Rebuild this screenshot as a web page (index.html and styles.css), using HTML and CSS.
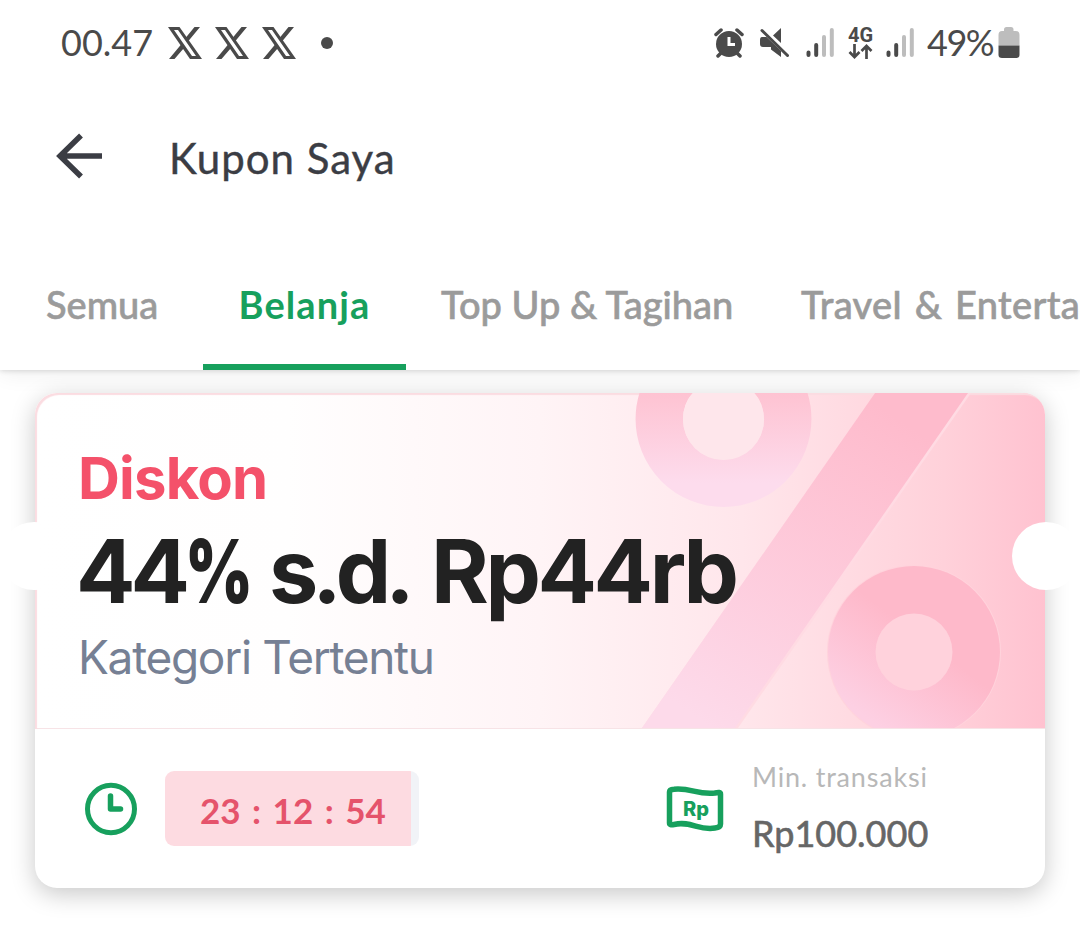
FILE: index.html
```html
<!DOCTYPE html>
<html lang="id">
<head>
<meta charset="utf-8">
<title>Kupon Saya</title>
<link rel="stylesheet" href="styles.css">
</head>
<body>
<svg width="0" height="0" class="defs">
  <defs>
    <symbol id="x-logo" viewBox="0 0 34 32">
      <path d="M0 0H11.500L34 32H22ZM6 3L24 29H28L10 3Z" fill-rule="evenodd"/>
      <path d="M26.500 0H32L20 14.500L17.300 11.200ZM13.500 17L16.200 20.800L6.500 32H1Z"/>
    </symbol>
    <symbol id="signal" viewBox="0 0 28 30">
      <g stroke-width="4" stroke-linecap="round"><path d="M2.500 24.500V27M10.200 17V27" stroke="#4a4a4a"/><path d="M18 9V27M25.800 2V27" stroke="#bdbdbd"/></g>
    </symbol>
  </defs>
</svg>
<div class="status">
  <span class="time">00.47</span>
  <div class="notifs">
    <svg class="x"><use href="#x-logo"/></svg>
    <svg class="x"><use href="#x-logo"/></svg>
    <svg class="x"><use href="#x-logo"/></svg>
  </div>
  <span class="dot"></span>
  <div class="system">
    <svg class="alarm" width="30" height="30" viewBox="0 0 30 30">
      <circle cx="15" cy="16" r="13" fill="#4a4a4a"/>
      <path d="M2 6.500L7 2M28 6.500L23 2M7 25L4 28M23 25L26 28" stroke="#4a4a4a" stroke-width="3.500" stroke-linecap="round"/>
      <path d="M15 9V16.500H21" fill="none" stroke="#fff" stroke-width="3"/>
    </svg>
    <svg class="mute" width="30" height="30" viewBox="0 0 30 30">
      <path d="M22 0V15L14 7.500ZM3 9H7.500L22 23V29L12 21.500V19H4Q1 19 1 16V12Q1 9 3 9Z" fill="#4a4a4a"/>
      <path d="M3 2.500L28.500 27.500" stroke="#4a4a4a" stroke-width="3" stroke-linecap="round"/>
    </svg>
    <svg class="signal"><use href="#signal"/></svg>
    <div class="net"><span>4G</span>
      <svg width="25" height="15" viewBox="0 0 25 15" fill="none" stroke="#4a4a4a" stroke-width="2.700"><path d="M6.500 0V12.500M1.500 8L6.500 13L11.500 8M18.500 15V2.500M13.500 7L18.500 2L23.500 7"/></svg>
    </div>
    <svg class="signal"><use href="#signal"/></svg>
    <span class="percent">49%</span>
    <svg class="battery" width="22" height="32" viewBox="0 0 22 32"><path d="M6 4V2.500Q6 0 8.500 0H13Q15.500 0 15.500 2.500V4H18Q21.500 4 21.500 8V18.500H.5V8Q.5 4 4 4Z" fill="#bdbdbd"/><path d="M.5 18.500H21.500V28Q21.500 31 18 31H4Q.5 31 .5 28Z" fill="#4a4a4a"/></svg>
  </div>
</div>
<header class="header">
  <svg width="46" height="46" viewBox="0 0 46 46" fill="none" stroke="#3b3d44" stroke-width="5.500"><path d="M25 2.500L4 23L25 43.500M3 23H46"/></svg>
  <h1>Kupon Saya</h1>
</header>
<nav class="tabs">
  <a class="tab semua">Semua</a>
  <a class="tab active">Belanja</a>
  <a class="tab topup">Top Up &amp; Tagihan</a>
  <a class="tab travel">Travel &amp; Enterta</a>
</nav>
<main>
  <article class="coupon">
    <section class="banner">
      <svg class="art" width="1010" height="335" viewBox="35 393 1010 335">
        <defs>
          <linearGradient id="ring1" x1="0" y1="0" x2="0" y2="1"><stop offset=".3" stop-color="#fec3d2"/><stop offset="1" stop-color="#fddced"/></linearGradient>
          <linearGradient id="ring2" x1=".7" y1=".3" x2=".25" y2=".9"><stop offset=".25" stop-color="#feb9ca"/><stop offset="1" stop-color="#fdd0e3"/></linearGradient>
          <linearGradient id="bar" gradientUnits="userSpaceOnUse" x1="900" y1="420" x2="700" y2="720"><stop stop-color="#febbcc"/><stop offset="1" stop-color="#fddaea"/></linearGradient>
        </defs>
        <path d="M875 393H971L738 728H642Z" fill="#ffdbe3"/>
        <path d="M875 393H968L735 728H642Z" fill="url(#bar)"/>
        <circle cx="723.500" cy="419" r="64.200" fill="none" stroke="url(#ring1)" stroke-width="47.500"/>
        <circle cx="723.500" cy="419.500" r="40.500" fill="#fee6eb"/>
        <circle cx="914" cy="652" r="87" fill="#ffd3dc"/>
        <circle cx="914" cy="652" r="86" fill="url(#ring2)"/>
        <circle cx="914" cy="652" r="38.500" fill="#ffd2dc"/>
      </svg>
      <div class="copy">
        <div class="kind">Diskon</div>
        <div class="value"><span class="rate">44<b>%</b></span> <span class="until">s.d.</span> <span class="cap">Rp44rb</span></div>
        <div class="scope">Kategori Tertentu</div>
      </div>
    </section>
    <section class="details">
      <svg class="clock" width="52" height="54" viewBox="0 0 52 54" fill="none" stroke="#17a05d" stroke-width="5"><ellipse cx="26" cy="27" rx="23.500" ry="23.700"/><path d="M25.500 14V27H35.500" stroke-width="5.500" stroke-linecap="round" stroke-linejoin="round"/></svg>
      <div class="timer"><span>23</span><span class="colon">:</span><span>12</span><span class="colon">:</span><span>54</span></div>
      <div class="money">
        <svg width="58" height="46" viewBox="0 0 58 46" fill="none" stroke="#17a05d" stroke-width="5.500" stroke-linejoin="round"><path d="M3.500 6Q3.500 3.500 8 3.200C25 1.500 31 9 49 7Q54.500 5.500 54.500 8V38Q54.500 41.500 49 42C33 45 25 34.500 8 38.500Q3.500 39.500 3.500 37Z"/></svg>
        <span>Rp</span>
      </div>
      <div class="minimum"><div class="label">Min. transaksi</div><div class="amount">Rp100.000</div></div>
    </section>
    <i class="notch left"></i><i class="notch right"></i>
  </article>
</main>
</body>
</html>
```
FILE: styles.css
```css
* { box-sizing: border-box; }
body { margin: 0; width: 1080px; height: 925px; overflow: hidden; background: #fff; font-family: Lato, "Open Sans", sans-serif; }
.defs { display: block; position: absolute; }
.status { height: 86px; display: flex; align-items: center; padding: 0 60px 0 61px; color: #4a4a4a; font-size: 36px; }
.time { width: 107px; margin-top: -3px; }
.notifs { display: flex; gap: 13px; }
.x { width: 34px; height: 32px; fill: #4a4a4a; }
.dot { width: 12px; height: 12px; border-radius: 50%; background: #4a4a4a; margin-left: 25px; }
.system { margin-left: auto; display: flex; align-items: center; }
.mute { margin-left: 15px; }
.signal { width: 28px; height: 30px; margin-left: 17px; }
.net { width: 25px; height: 34px; margin-left: 14px; display: flex; flex-direction: column; font: 700 20px/18px Roboto, sans-serif; }
.net + .signal { margin-left: 13px; }
.percent { width: 70px; margin: -2px 0 0 13px; letter-spacing: -1.500px; white-space: nowrap; }
.battery { margin-left: 1px; }
.header { height: 144px; display: flex; align-items: flex-start; padding: 47px 0 0 56px; color: #3b3d44; }
.header h1 { margin: 0 0 0 67px; font-size: 42px; line-height: 50px; font-weight: 400; letter-spacing: 1px; -webkit-text-stroke: .4px currentColor; }
.tabs { height: 140px; display: flex; position: relative; z-index: 2; background: #fff; box-shadow: 0 1px 5px rgba(0,0,0,.14), 0 3px 22px rgba(0,0,0,.07); clip-path: inset(0 0 -23px 0); color: #9b9b9b; font-size: 38px; }
.tab { flex: none; height: 140px; padding-top: 51px; line-height: 46px; font-weight: 500; white-space: nowrap; -webkit-text-stroke: .6px currentColor; }
.semua { width: 203px; padding-left: 46px; }
.active { width: 203px; text-align: center; font-weight: 700; letter-spacing: 1.100px; color: #17a05d; border-bottom: 6px solid #17a05d; -webkit-text-stroke: 0; }
.topup { width: 359px; padding-left: 35px; }
.travel { width: 315px; overflow: hidden; padding-left: 36px; letter-spacing: .3px; word-spacing: 3px; }
main { padding: 23px 35px 37px; }
.coupon { position: relative; height: 495px; border-radius: 22px; background: #fff; box-shadow: 0 6px 24px rgba(0,0,0,.22); }
.banner { display: grid; height: 336px; border-radius: 22px 22px 0 0; overflow: hidden; background: linear-gradient(90deg, #fff 0, #fffefe 25%, #fff4f6 50%, #ffe6eb 70%, #ffd1da 90%, #ffc2d0 100%); box-shadow: inset 2px 2px 1px #fbdce1, inset 0 -1px #f7e3e6; }
.banner > * { grid-area: 1 / 1; }
.copy { padding: 53px 0 0 43px; position: relative; font-family: Inter, sans-serif; white-space: nowrap; }
.kind { font-size: 58px; line-height: 64px; font-weight: 700; letter-spacing: -.800px; color: #f4516a; }
.value { margin-top: 11px; display: flex; font-size: 88px; line-height: 100px; font-weight: 700; color: #222; }
.rate { width: 193px; margin-left: -2px; letter-spacing: -5px; }
.rate b { display: inline-block; transform: scaleX(.74); transform-origin: left; }
.until { width: 162px; letter-spacing: -6px; }
.cap { letter-spacing: -3.400px; }
.scope { margin-top: 9px; font-size: 46px; line-height: 54px; letter-spacing: -1.300px; color: #768094; }
.details { height: 159px; display: flex; align-items: flex-start; padding-left: 50px; }
.clock { margin-top: 53px; }
.timer { margin: 42px 0 0 28px; width: 254px; height: 75px; display: flex; align-items: center; gap: 10px; padding: 2px 0 0 35px; border-radius: 9px; background: linear-gradient(90deg, #fddbe1 246px, #f1f3f7 246px); color: #e5536b; font-size: 35px; font-weight: 700; }
.colon { width: 12px; text-align: center; }
.money { display: grid; place-items: center; margin: 57px 0 0 247px; width: 58px; height: 46px; }
.money > * { grid-area: 1 / 1; }
.money span { color: #17a05d; font: 800 20px/20px Inter, sans-serif; margin: 0 0 0 2px; }
.minimum { margin: 33px 0 0 28px; white-space: nowrap; }
.label { font-size: 27px; line-height: 30px; letter-spacing: .800px; color: #b8b8b8; }
.amount { margin-top: 20px; font-size: 36px; line-height: 42px; color: #666; -webkit-text-stroke: .6px currentColor; }
.notch { position: absolute; top: 129px; width: 68px; height: 68px; border-radius: 50%; background: #fff; }
.left { left: -35px; clip-path: inset(0 30px 0 0); }
.right { right: -35px; }
```
